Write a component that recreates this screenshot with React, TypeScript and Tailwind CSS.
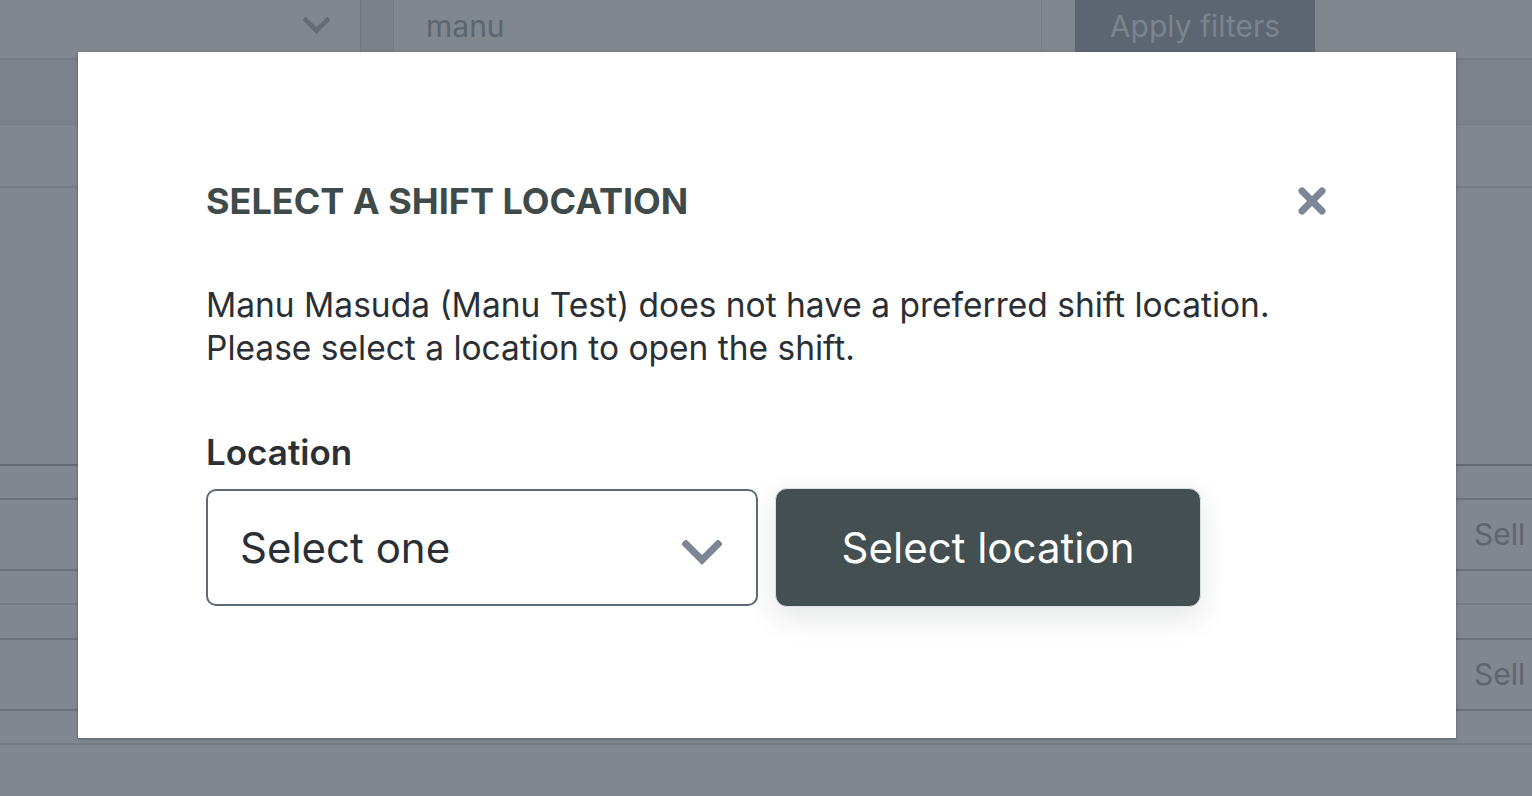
import React from "react";

function Chevron({ className }: { className?: string }) {
  return (
    <svg viewBox="0 0 40 26" className={className} fill="none">
      <path d="M4 4 L20 20 L36 4" stroke="currentColor" strokeWidth="7" strokeLinecap="square" strokeLinejoin="miter" />
    </svg>
  );
}

function CloseX({ className }: { className?: string }) {
  return (
    <svg viewBox="0 0 30 30" className={className} fill="none">
      <path d="M5 5 L25 25 M25 5 L5 25" stroke="currentColor" strokeWidth="7" strokeLinecap="round" />
    </svg>
  );
}

export default function App() {
  return (
    <div
      className="relative w-[1532px] h-[796px] overflow-hidden bg-[#80878f]"
      style={{ fontFamily: "Inter, 'Noto Sans', Arial, sans-serif" }}
    >
      {/* dimmed background page */}
      <div className="flex flex-col">
        <div className="flex h-[60px] border-b-2 border-[#737b84]">
          <div className="w-[360px] flex items-center justify-end pr-[30px] pb-[6px]">
            <Chevron className="w-[27px] h-[18px] text-[#646c75]" />
          </div>
          <div className="w-[34px] border-x border-[#6f7780] bg-[#7a818a]" />
          <div className="w-[648px] flex items-center pl-[32px] pb-[6px] border-r border-[#737b84] text-[30px] text-[#5d656e]">
            manu
          </div>
          <div className="w-[33px]" />
          <div className="w-[240px] bg-[#5d6670] flex items-center justify-center pb-[6px] text-[30px] text-[#7b848e]">
            Apply filters
          </div>
          <div className="flex-1" />
        </div>
        <div className="h-[65px] bg-[#7b828b] border-b border-[#767e87]" />
        <div className="h-[63px] border-b-2 border-[#737b84]" />
        <div className="h-[278px] border-b-2 border-[#626a73]" />
        <div className="h-[34px] border-b-2 border-[#6a727b]" />
        <div className="h-[71px] border-b-2 border-[#6a727b] flex items-center justify-end">
          <span className="text-[30px] text-[#5d656e] w-[58px]">Sell</span>
        </div>
        <div className="h-[34px] border-b-2 border-[#737b84]" />
        <div className="h-[35px] border-b-2 border-[#6a727b]" />
        <div className="h-[71px] border-b-2 border-[#6a727b] flex items-center justify-end">
          <span className="text-[30px] text-[#5d656e] w-[58px]">Sell</span>
        </div>
        <div className="h-[34px] border-b-2 border-[#737b84]" />
      </div>

      {/* modal */}
      <div className="absolute left-[78px] top-[52px] w-[1378px] h-[686px] bg-white shadow-[0_1px_3px_rgba(40,50,60,0.45)] pt-[124px] px-[128px]">
        <div className="flex items-center justify-between h-[50px]">
          <h2 className="text-[36px] font-bold tracking-[0px] text-[#3f4a4b] uppercase">
            Select a shift location
          </h2>
          <CloseX className="w-[30px] h-[30px] text-[#7b8794] mr-[1px]" />
        </div>
        <p className="mt-[58px] text-[33.5px] leading-[43px] text-[#2a2f35]">
          Manu Masuda (Manu Test) does not have a preferred shift location.
          <br />
          Please select a location to open the shift.
        </p>
        <div className="mt-[62px] text-[35px] font-semibold leading-[40px] text-[#2b3035]">Location</div>
        <div className="mt-[16px] flex items-center gap-[17px]">
          <div className="w-[552px] h-[117px] border-2 border-[#5f6a76] rounded-[10px] flex items-center justify-between pl-[32px] pr-[34px]">
            <span className="text-[42px] text-[#2a2f35]">Select one</span>
            <Chevron className="w-[40px] h-[26px] text-[#7b8794] mt-[10px]" />
          </div>
          <div className="w-[426px] h-[119px] rounded-[12px] bg-[#434f50] border border-[#dde2e6] shadow-[0_10px_30px_rgba(30,40,50,0.12)] flex items-center justify-center text-[42px] text-white">
            Select location
          </div>
        </div>
      </div>
    </div>
  );
}
